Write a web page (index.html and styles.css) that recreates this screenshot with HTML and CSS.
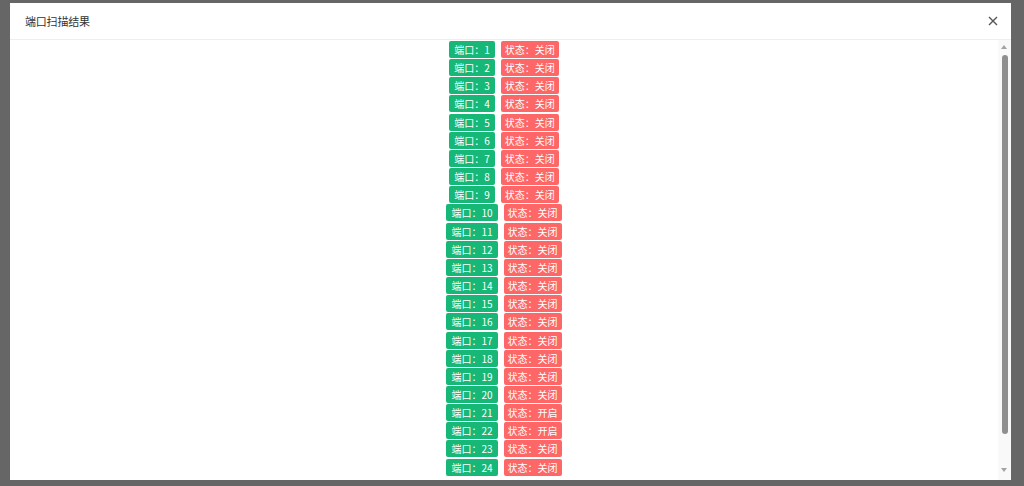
FILE: index.html
```html
<!DOCTYPE html>
<html lang="zh-CN">
<head>
<meta charset="utf-8">
<title>端口扫描结果</title>
<link rel="stylesheet" href="styles.css">
</head>
<body>
<div class="dialog">
  <div class="dialog-head">
    <span class="dialog-title">端口扫描结果</span>
    <span class="dialog-close">
      <svg width="10" height="10" viewBox="0 0 10 10"><path d="M1 1 L9 9 M9 1 L1 9" stroke="#555" stroke-width="1.4" fill="none"/></svg>
    </span>
  </div>
  <div class="dialog-body">
    <div class="list">
      <div class="row"><span class="tag tag-port">端口：1</span><span class="tag tag-state">状态：关闭</span></div>
      <div class="row"><span class="tag tag-port">端口：2</span><span class="tag tag-state">状态：关闭</span></div>
      <div class="row"><span class="tag tag-port">端口：3</span><span class="tag tag-state">状态：关闭</span></div>
      <div class="row"><span class="tag tag-port">端口：4</span><span class="tag tag-state">状态：关闭</span></div>
      <div class="row"><span class="tag tag-port">端口：5</span><span class="tag tag-state">状态：关闭</span></div>
      <div class="row"><span class="tag tag-port">端口：6</span><span class="tag tag-state">状态：关闭</span></div>
      <div class="row"><span class="tag tag-port">端口：7</span><span class="tag tag-state">状态：关闭</span></div>
      <div class="row"><span class="tag tag-port">端口：8</span><span class="tag tag-state">状态：关闭</span></div>
      <div class="row"><span class="tag tag-port">端口：9</span><span class="tag tag-state">状态：关闭</span></div>
      <div class="row"><span class="tag tag-port">端口：10</span><span class="tag tag-state">状态：关闭</span></div>
      <div class="row"><span class="tag tag-port">端口：11</span><span class="tag tag-state">状态：关闭</span></div>
      <div class="row"><span class="tag tag-port">端口：12</span><span class="tag tag-state">状态：关闭</span></div>
      <div class="row"><span class="tag tag-port">端口：13</span><span class="tag tag-state">状态：关闭</span></div>
      <div class="row"><span class="tag tag-port">端口：14</span><span class="tag tag-state">状态：关闭</span></div>
      <div class="row"><span class="tag tag-port">端口：15</span><span class="tag tag-state">状态：关闭</span></div>
      <div class="row"><span class="tag tag-port">端口：16</span><span class="tag tag-state">状态：关闭</span></div>
      <div class="row"><span class="tag tag-port">端口：17</span><span class="tag tag-state">状态：关闭</span></div>
      <div class="row"><span class="tag tag-port">端口：18</span><span class="tag tag-state">状态：关闭</span></div>
      <div class="row"><span class="tag tag-port">端口：19</span><span class="tag tag-state">状态：关闭</span></div>
      <div class="row"><span class="tag tag-port">端口：20</span><span class="tag tag-state">状态：关闭</span></div>
      <div class="row"><span class="tag tag-port">端口：21</span><span class="tag tag-state">状态：开启</span></div>
      <div class="row"><span class="tag tag-port">端口：22</span><span class="tag tag-state">状态：开启</span></div>
      <div class="row"><span class="tag tag-port">端口：23</span><span class="tag tag-state">状态：关闭</span></div>
      <div class="row"><span class="tag tag-port">端口：24</span><span class="tag tag-state">状态：关闭</span></div>
    </div>
    <div class="scrollbar">
      <span class="arrow arrow-up"></span>
      <span class="thumb"></span>
      <span class="spacer"></span>
      <span class="arrow arrow-down"></span>
    </div>
  </div>
</div>
</body>
</html>
```
FILE: styles.css
```css
html, body {
  margin: 0;
  height: 100%;
}
body {
  background: #666666;
  padding: 3px 13px 6px 10px;
  box-sizing: border-box;
  font-family: "Noto Sans CJK SC", "Noto Sans", sans-serif;
}
.dialog {
  background: #ffffff;
  height: 477px;
  display: flex;
  flex-direction: column;
}
.dialog-head {
  height: 36px;
  border-bottom: 1px solid #eeeeee;
  display: flex;
  align-items: center;
  justify-content: space-between;
  padding: 0 13px 0 15px;
  flex: none;
}
.dialog-title {
  font-size: 11px;
  color: #333333;
  letter-spacing: -0.2px;
}
.dialog-close {
  display: flex;
  align-items: center;
}
.dialog-body {
  flex: 1;
  min-height: 0;
  display: flex;
}
.list {
  flex: 1;
  overflow: hidden;
  padding-top: 1px;
}
.row {
  display: flex;
  justify-content: center;
  gap: 6px;
  margin-bottom: 1.17px;
}
.tag {
  display: inline-block;
  height: 17px;
  line-height: 17px;
  font-size: 10px;
  color: #ffffff;
  border-radius: 2px;
}
.tag-port {
  background: #16b777;
  padding: 0 5px;
}
.tag-state {
  background: #fd6767;
  padding: 0 4px;
}
.scrollbar {
  width: 13px;
  flex: none;
  background: #f9f9f9;
  display: flex;
  flex-direction: column;
  padding: 5px 0 8px;
  box-sizing: border-box;
}
.arrow {
  width: 0;
  height: 0;
  margin-left: 3px;
  border-left: 3.5px solid transparent;
  border-right: 3.5px solid transparent;
}
.arrow-up {
  border-bottom: 4px solid #a3a3a3;
}
.arrow-down {
  border-top: 4px solid #a3a3a3;
}
.thumb {
  width: 6px;
  height: 379px;
  margin: 6px 0 0 4px;
  border-radius: 3px;
  background: #8f8f8f;
  flex: none;
}
.spacer {
  flex: 1;
}
```
